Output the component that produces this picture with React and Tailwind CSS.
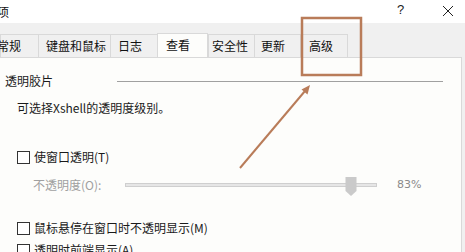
import React from "react";

function Checkbox({ label }) {
  return (
    <div className="flex items-center h-[16px] pl-[17px]">
      <div className="w-[13px] h-[13px] border border-[#333333] bg-white shrink-0" />
      <span className="ml-[4px] text-[12px] leading-[16px] text-[#1a1a1a] whitespace-nowrap">{label}</span>
    </div>
  );
}

function Tab({ label, w, pl, selected, textShift }) {
  if (selected) {
    return (
      <div
        className={`h-[25px] bg-[#fdfdfb] border-l border-r border-t border-[#d9d9d9] flex items-center relative z-10 -mb-px ${w} ${pl}`}
      >
        <span className="text-[12px] leading-[16px] text-[#111111] whitespace-nowrap -mt-[3px]">{label}</span>
      </div>
    );
  }
  return (
    <div
      className={`h-[23px] bg-[#f0f0f0] border-l border-t border-[#d9d9d9] flex items-center ${w} ${pl}`}
    >
      <span className={`text-[12px] leading-[16px] text-[#111111] whitespace-nowrap ${textShift || ""}`}>{label}</span>
    </div>
  );
}

export default function App() {
  return (
    <div
      className="relative w-[465px] h-[252px] overflow-hidden bg-[#f0f0f0]"
      style={{ fontFamily: '"Microsoft YaHei", "Noto Sans CJK SC", sans-serif' }}
    >
      {/* title bar */}
      <div className="h-[23px] bg-white flex items-center relative">
        <span className="text-[12px] leading-[16px] text-[#111111] -ml-[3px]">项</span>
        <span className="absolute left-[397px] top-[2px] text-[13px] leading-[16px] text-[#222222]" style={{ fontFamily: '"Liberation Sans", sans-serif' }}>?</span>
        <svg className="absolute left-[442px] top-[5px]" width="12" height="12" viewBox="0 0 12 12">
          <path d="M1 1 L11 11 M11 1 L1 11" stroke="#222222" strokeWidth="1" fill="none" />
        </svg>
      </div>

      {/* tab strip */}
      <div className="h-[34px] flex items-end">
        <div className="flex items-end overflow-hidden">
          <Tab label="常规" w="w-[38px]" pl="pl-0" textShift="-ml-[4px]" />
          <Tab label="键盘和鼠标" w="w-[72px]" pl="pl-[7px]" />
          <Tab label="日志" w="w-[47px]" pl="pl-[7px]" />
          <Tab label="查看" w="w-[51px]" pl="pl-[8px]" selected />
          <Tab label="安全性" w="w-[46px]" pl="pl-[3px]" />
          <Tab label="更新" w="w-[46px]" pl="pl-[6px]" />
          <div className="h-[23px] w-[48px] bg-[#f0f0f0] border-l border-t border-r border-[#d9d9d9] flex items-center pl-[8px]">
            <span className="text-[12px] leading-[16px] text-[#111111] whitespace-nowrap">高级</span>
          </div>
        </div>
      </div>

      {/* panel */}
      <div className="w-[462px] h-[195px] bg-[#fdfdfb] border-t border-r border-[#d9d9d9] flex flex-col">
        <div className="mt-[15px] h-[16px] flex items-center">
          <span className="ml-[5px] text-[12px] leading-[16px] text-[#1a1a1a] whitespace-nowrap">透明胶片</span>
          <div className="ml-[64px] w-[326px] h-px bg-[#a0a0a0]" />
        </div>
        <div className="mt-[11px] h-[16px] flex items-center pl-[17px]">
          <span className="text-[12px] leading-[16px] text-[#1a1a1a] whitespace-nowrap">可选择Xshell的透明度级别。</span>
        </div>
        <div className="mt-[33px]">
          <Checkbox label="使窗口透明(T)" />
        </div>
        <div className="mt-[12px] h-[16px] flex items-center relative">
          <span className="ml-[33px] w-[92px] text-[12px] leading-[16px] text-[#a0a0a0] whitespace-nowrap">不透明度(O):</span>
          <div className="relative w-[252px] h-[4px] bg-[#e6e6e6] border border-[#cfcfcf]">
            <svg className="absolute left-[219px] -top-[7px]" width="12" height="19" viewBox="0 0 12 19">
              <path d="M0.5 0 H11.5 V14 L6 19 L0.5 14 Z" fill="#cacaca" />
            </svg>
          </div>
          <span className="ml-[20px] text-[12px] leading-[16px] text-[#8a8a8a]" style={{ fontFamily: '"DejaVu Sans", sans-serif', fontSize: "11px" }}>83%</span>
        </div>
        <div className="mt-[27px]">
          <Checkbox label="鼠标悬停在窗口时不透明显示(M)" />
        </div>
        <div className="mt-[6px]">
          <Checkbox label="透明时前端显示(A)" />
        </div>
      </div>

      {/* annotation overlay */}
      <svg className="absolute left-0 top-0 pointer-events-none" width="465" height="252" viewBox="0 0 465 252">
        <rect x="302" y="18" width="59" height="57" fill="none" stroke="#b97c59" strokeWidth="2.5" />
        <line x1="240" y1="168" x2="305" y2="91" stroke="#b97c59" strokeWidth="2" />
        <path d="M310 85 L301.5 89.5 L307.5 94.5 Z" fill="#b97c59" />
      </svg>
    </div>
  );
}
